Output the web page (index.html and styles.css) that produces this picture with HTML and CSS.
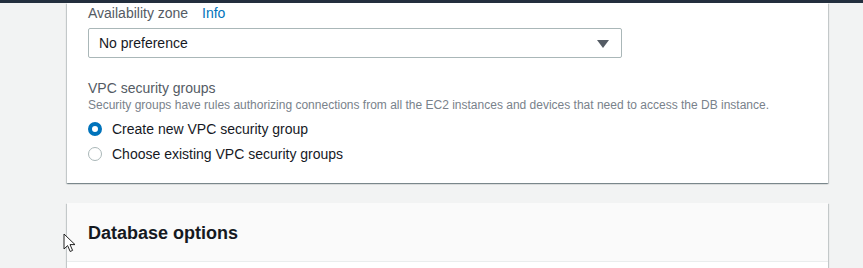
FILE: index.html
```html
<!DOCTYPE html>
<html>
	<head>
		<meta charset="utf-8">
		<title>Connectivity</title>
		<link rel="stylesheet" href="styles.css">
	</head>
	<body>
		<!-- 顶部深色导航条的底边 -->
		<div class="topbar"></div>

		<div class="page">
			<!-- 连接设置卡片 -->
			<div class="card">
				<div class="card-body">
					<div class="label">Availability zone <a class="info" href="javascript:;">Info</a></div>
					<div class="select">
						<span>No preference</span>
						<i class="caret"></i>
					</div>

					<div class="field-title">VPC security groups</div>
					<div class="field-desc">Security groups have rules authorizing connections from all the EC2 instances and devices that need to access the DB instance.</div>
					<label class="radio-row">
						<span class="radio checked"></span>
						<span>Create new VPC security group</span>
					</label>
					<label class="radio-row">
						<span class="radio"></span>
						<span>Choose existing VPC security groups</span>
					</label>
				</div>
			</div>

			<!-- 数据库选项卡片 -->
			<div class="card card-db">
				<div class="card-header">Database options</div>
				<div class="card-body empty"></div>
			</div>
		</div>

		<!-- 鼠标指针 -->
		<svg class="cursor" width="14" height="20" viewBox="0 0 14 20">
			<path d="M1 1 L1 16 L4.6 12.6 L7.2 18.5 L9.6 17.4 L7 11.6 L12 11.6 Z" fill="#fff" stroke="#222" stroke-width="1" stroke-linejoin="round"/>
		</svg>
	</body>
</html>
```

FILE: styles.css
```css
*{
	margin: 0;padding: 0;
	box-sizing: border-box;
}
body{
	background-color: #f2f3f3;
	font-family: "Liberation Sans", Arial, sans-serif;
	color: #16191f;
	height: 268px;
	overflow: hidden;
	position: relative;
}
.topbar{
	height: 3px;
	background-color: #232f3e;
}
.page{
	padding-left: 67px;
}
.card{
	width: 761px;
	background-color: #fff;
	box-shadow: 0 1px 1px 0 rgba(0,28,36,.3), 1px 1px 1px 0 rgba(0,28,36,.15), -1px 1px 1px 0 rgba(0,28,36,.15);
}
.card-body{
	padding: 0 21px 17px;
}
.label{
	font-size: 14px;
	line-height: 20px;
	color: #545b64;
}
.info{
	color: #0073bb;
	text-decoration: none;
	margin-left: 10px;
}
.select{
	width: 534px;height: 30px;
	margin-top: 5px;
	border: 1px solid #aab7b8;
	border-radius: 2px;
	display: flex;
	align-items: center;
	justify-content: space-between;
	padding: 0 12px 0 10px;
	font-size: 14px;
}
/* 下拉三角 */
.caret{
	width: 0;height: 0;
	border-left: 6px solid transparent;
	border-right: 6px solid transparent;
	border-top: 8px solid #545b64;
	margin-top: 1px;
}
.field-title{
	margin-top: 21px;
	font-size: 14px;
	line-height: 18px;
	color: #545b64;
}
.field-desc{
	font-size: 12px;
	line-height: 16px;
	color: #79828b;
	margin-bottom: 3px;
}
.radio-row{
	display: flex;
	align-items: center;
	height: 25px;
	font-size: 14px;
	color: #16191f;
}
.radio{
	width: 14px;height: 14px;
	border-radius: 50%;
	border: 1px solid #aab7b8;
	background-color: #fff;
	margin-right: 10px;
	margin-top: 1px;
}
.radio.checked{
	border: 4px solid #0073bb;
	background-color: #fff;
}
.card-db{
	margin-top: 20px;
}
.card-header{
	height: 59px;
	background-color: #fafafa;
	border-bottom: 1px solid #eaeded;
	padding: 2px 21px 0;
	display: flex;
	align-items: center;
	font-size: 18px;
	font-weight: bold;
}
.card-body.empty{
	height: 8px;
	padding: 0;
}
.cursor{
	position: absolute;
	left: 63px;top: 233px;
}
```
